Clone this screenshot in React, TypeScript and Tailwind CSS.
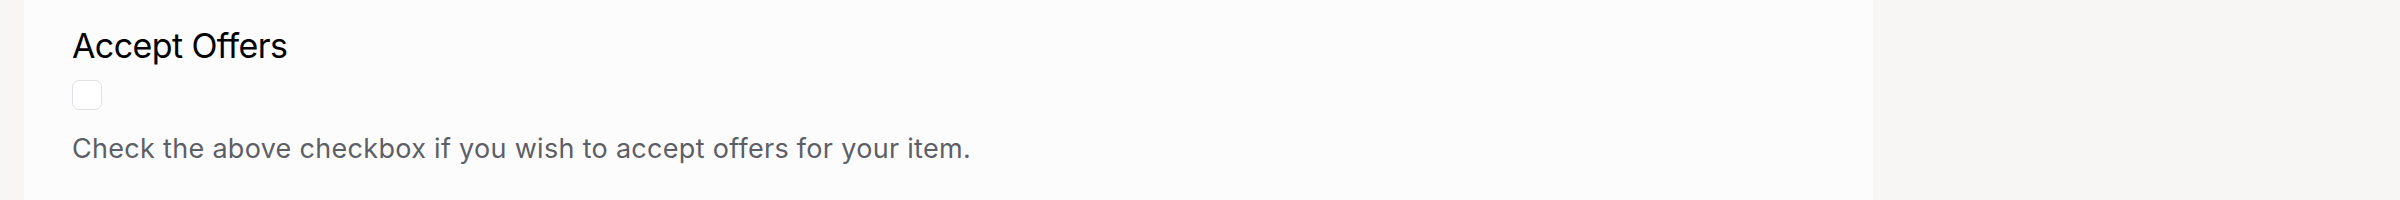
import React, { useState } from "react";

export default function App() {
  const [accept, setAccept] = useState(false);

  return (
    <div className="min-h-[200px] w-[2400px] bg-[#f7f6f4] font-['Inter',sans-serif]">
      <div className="ml-[24px] flex min-h-[200px] w-[1849px] flex-col bg-[#fcfcfc] px-[48px] pt-[19px]">
        {/* Field label */}
        <label
          htmlFor="accept-offers"
          className="text-[34px] leading-[54px] font-normal tracking-[-0.6px] text-black"
        >
          Accept Offers
        </label>

        {/* Checkbox */}
        <div className="mt-[7px] flex">
          <input
            id="accept-offers"
            type="checkbox"
            checked={accept}
            onChange={(e) => setAccept(e.target.checked)}
            className="h-[30px] w-[30px] cursor-pointer appearance-none rounded-[7px] border-[1.5px] border-[#dde0e5] bg-white checked:bg-[#171717]"
          />
        </div>

        {/* Help text */}
        <p className="mt-[19px] text-[27px] leading-[40px] tracking-[0.3px] text-[#5c5f66]">
          Check the above checkbox if you wish to accept offers for your item.
        </p>
      </div>
    </div>
  );
}
